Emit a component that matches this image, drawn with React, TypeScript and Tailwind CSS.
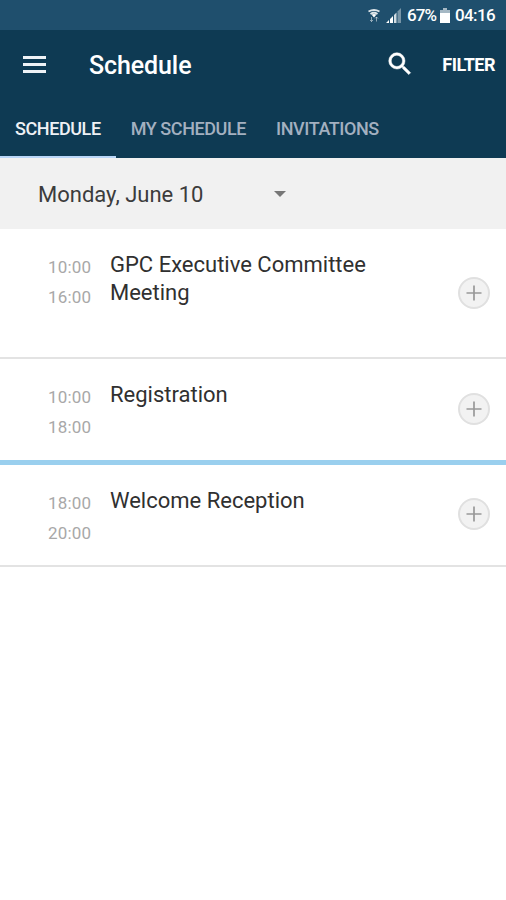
import clsx from "clsx";

const tabs = ["Schedule", "My Schedule", "Invitations"];

const sessions = [
  {
    title: "GPC Executive Committee Meeting",
    start: "10:00",
    end: "16:00",
    rowClass: "h-[130px] border-b-2 border-[#e3e3e3]",
    addClass: "",
  },
  {
    title: "Registration",
    start: "10:00",
    end: "18:00",
    rowClass: "h-[106px] border-b-[5px] border-[#9acfee]",
    addClass: "mb-0.5",
  },
  {
    title: "Welcome Reception",
    start: "18:00",
    end: "20:00",
    rowClass: "h-[102px] border-b-2 border-[#e3e3e3]",
    addClass: "mb-0.5",
  },
];

function StatusBar() {
  return (
    <div className="flex h-[30px] items-center justify-end bg-[#1f4f6d] pt-px pr-[11px] text-white">
      <svg className="mr-1.5 h-[13px] w-3" viewBox="0 0 12 13" fill="none" stroke="#fff">
        <path d="M.5 2.500Q6 -.5 11.500 2.500M2.500 5Q6 2.500 9.500 5" strokeWidth="1.800" opacity=".85" />
        <path d="M3.500 5.500Q6 4.500 8.500 5.500L6 8.500Z" fill="#fff" stroke="none" />
        <path d="M3.500 8v4.500M2 11L3.500 12.500L5 11M8.500 12.500V8M7 9.500L8.500 8L10 9.500" opacity=".5" />
      </svg>
      <svg className="mr-1.5 h-[15px] w-[15px]" viewBox="0 0 15 15" fill="#fff">
        <path d="M0 15L3 12V15ZM4 15V11L7 8V15Z" />
        <path d="M8 15V7L10.500 4.500V15Z" opacity=".8" />
        <path d="M11.500 15V3.500L15 0V15Z" opacity=".4" />
      </svg>
      <span className="w-[29px] text-[17px] leading-none font-medium whitespace-nowrap tracking-[-0.9px]">
        67%
      </span>
      <svg className="mr-[5px] ml-1 h-[15px] w-[10px]" viewBox="0 0 10 15" fill="#fff">
        <path d="M3 0H7V2H10V6H0V2H3Z" opacity=".6" />
        <path d="M0 5H10V15H0Z" />
      </svg>
      <span className="w-10 text-[17px] leading-none font-medium whitespace-nowrap tracking-[-0.6px]">
        04:16
      </span>
    </div>
  );
}

function AppBar() {
  return (
    <header className="bg-[#0e3a53]">
      <div className="flex h-[70px] items-center pr-[11px] pl-[23px] text-white">
        <button aria-label="Menu" className="-mt-px flex w-[23px] flex-col gap-1">
          <span className="h-[3px] bg-[#eef2f6]" />
          <span className="h-[3px] bg-[#eef2f6]" />
          <span className="h-[3px] bg-[#eef2f6]" />
        </button>
        <h1 className="ml-[43px] flex-1 pt-px text-[25px] leading-none font-medium tracking-[-0.1px]">
          Schedule
        </h1>
        <button aria-label="Search" className="mr-[27px] -mt-[3px]">
          <svg className="size-[30px]" viewBox="0 0 24 24" fill="#fff" stroke="#fff" strokeWidth=".4">
            <path d="M15.500 14h-.79l-.28-.27A6.470 6.470 0 0 0 16 9.500 6.500 6.500 0 1 0 9.500 16c1.610 0 3.090-.59 4.230-1.570l.27.28v.79l5 4.990L20.490 19l-4.990-5zm-6 0A4.490 4.490 0 0 1 5 9.500 4.490 4.490 0 0 1 9.500 5 4.490 4.490 0 0 1 14 9.500 4.490 4.490 0 0 1 9.500 14z" />
          </svg>
        </button>
        <button className="text-[18px] leading-none font-bold tracking-[-0.5px] uppercase">Filter</button>
      </div>

      <nav className="flex h-[58px]">
        {tabs.map((tab, i) => (
          <button
            key={tab}
            className={clsx(
              "border-b-2 px-[15px] text-[18px] font-medium tracking-[-0.42px] whitespace-nowrap uppercase",
              i === 0 ? "border-[#b9d6f8] text-[#eef1f5]" : "border-transparent text-[#a3b0c0]"
            )}
          >
            {tab}
          </button>
        ))}
      </nav>
    </header>
  );
}

function DateSelect() {
  return (
    <div className="flex h-[71px] items-center bg-[#f1f1f1] pl-[38px] text-[#3c3c3c]">
      <span className="w-[236px] pt-0.5 text-[22px] leading-none">Monday, June 10</span>
      <svg className="h-1.5 w-3" viewBox="0 0 12 6" fill="#777">
        <path d="M0 0H12L6 6Z" />
      </svg>
    </div>
  );
}

export default function App() {
  return (
    <div className="min-h-screen w-full bg-white font-['Roboto',sans-serif]">
      <StatusBar />
      <AppBar />
      <DateSelect />
      <main>
        {sessions.map((session) => (
          <div key={session.title} className={clsx("flex items-center pr-4", session.rowClass)}>
            <div className="w-[110px] self-start pt-[23px] pl-12 text-[17px] leading-[30px] tracking-[0.15px] text-[#a8a8a8]">
              <p>{session.start}</p>
              <p>{session.end}</p>
            </div>
            <h2 className="w-[280px] self-start pt-[22px] text-[22px] leading-[28px] text-[#303030]">
              {session.title}
            </h2>
            <button
              aria-label={`Add ${session.title}`}
              className={clsx(
                "ml-auto flex size-8 items-center justify-center rounded-full border-2 border-[#e0e0e0] bg-[#f2f2f2]",
                session.addClass
              )}
            >
              <svg className="size-4" viewBox="0 0 16 16" stroke="#999" strokeWidth="1.700">
                <path d="M8 .5V15.500M.5 8H15.500" />
              </svg>
            </button>
          </div>
        ))}
      </main>
    </div>
  );
}
